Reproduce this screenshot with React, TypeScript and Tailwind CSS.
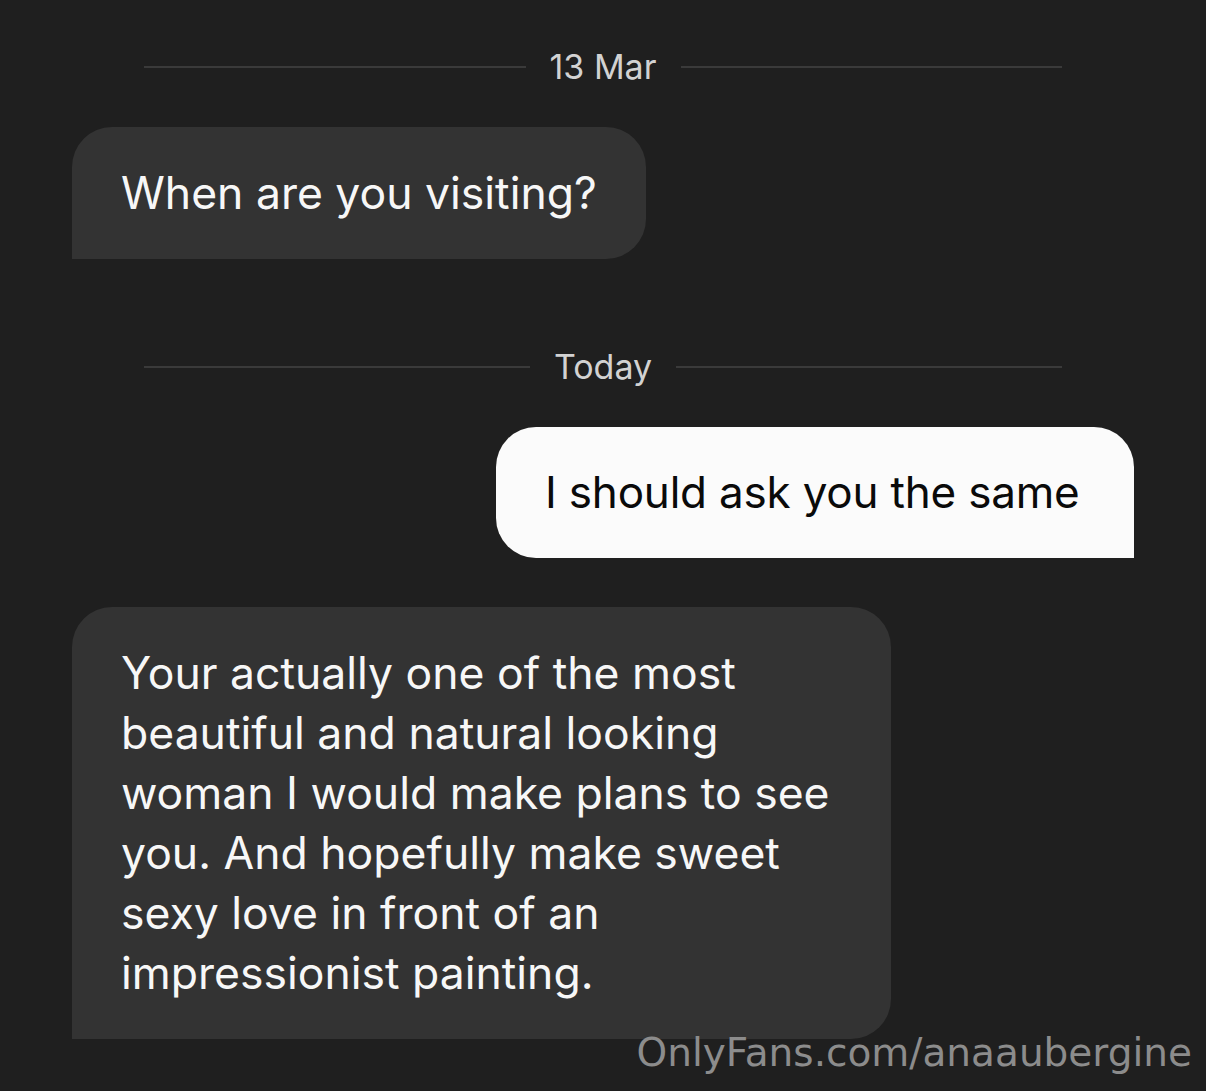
export default function App() {
  const font = { fontFamily: "Inter, 'Noto Sans', sans-serif" };
  const Divider = ({ label }: { label: string }) => (
    <div className="mx-[72px] flex h-[40px] items-center gap-[24px]">
      <div className="h-[2px] flex-1 bg-[#3a3a3a]" />
      <span className="text-[34px] leading-none text-[#d2d2d2]" style={font}>{label}</span>
      <div className="h-[2px] flex-1 bg-[#3a3a3a]" />
    </div>
  );
  return (
    <div className="relative h-[1091px] w-[1206px] overflow-hidden bg-[#1f1f1f]" style={font}>
      <div className="flex flex-col px-[72px] pt-[47px]">
        <Divider label="13 Mar" />
        <div className="mt-[40px] w-[574px] rounded-[40px] rounded-bl-none bg-[#333333] px-[49px] py-[36px] text-[44.5px] leading-[60px] text-[#f7f7f7]">
          When are you visiting?
        </div>
        <div className="mt-[88px]">
          <Divider label="Today" />
        </div>
        <div className="mt-[40px] self-end w-[638px] whitespace-nowrap rounded-[40px] rounded-br-none bg-[#fbfbfb] px-[49px] py-[36px] text-[44px] tracking-[-0.2px] leading-[59px] text-[#0a0a0a]">
          I should ask you the same
        </div>
        <div className="mt-[49px] w-[819px] rounded-[40px] rounded-bl-none bg-[#333333] px-[49px] py-[36px] text-[44.5px] leading-[60px] text-[#f7f7f7]">
          Your actually one of the most beautiful and natural looking woman I would make plans to see you. And hopefully make sweet sexy love in front of an impressionist painting.
        </div>
      </div>
      <div
        className="absolute right-[14px] top-[1033px] text-[39px] leading-none text-[#8c8c8c]"
        style={{ fontFamily: "'DejaVu Sans', sans-serif" }}
      >
        OnlyFans.com/anaaubergine
      </div>
    </div>
  );
}
